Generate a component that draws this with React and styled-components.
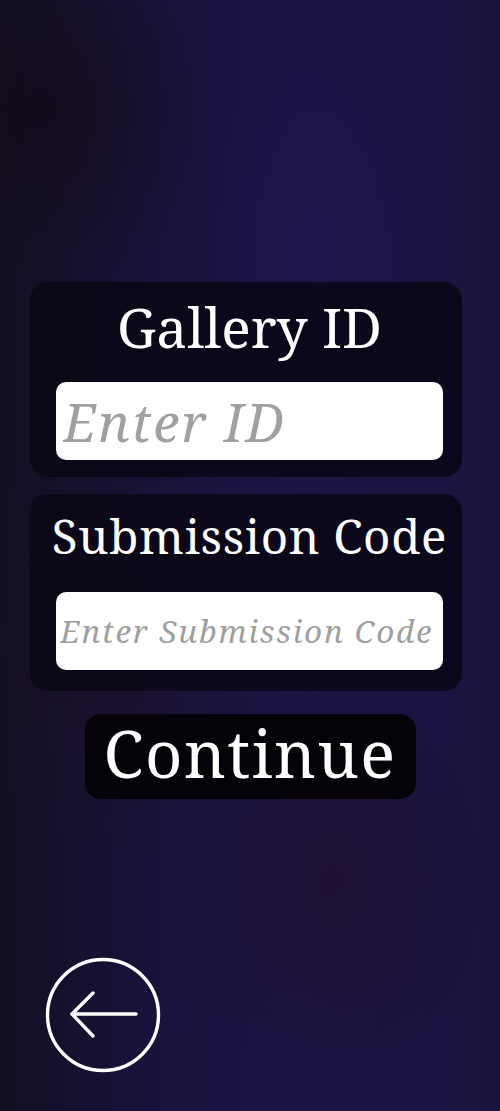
import React from 'react';
import styled, { createGlobalStyle } from 'styled-components';

const GlobalStyle = createGlobalStyle`
  html, body { margin: 0; padding: 0; }
  body {
    font-family: "Noto Serif", "DejaVu Serif", "Liberation Serif", serif;
    background: #151130;
  }
`;

const serif = `"Noto Serif", "DejaVu Serif", "Liberation Serif", serif`;

const Page = styled.div`
  width: 500px;
  height: 1111px;
  box-sizing: border-box;
  display: flex;
  flex-direction: column;
  align-items: center;
  padding-top: 282px;
  background:
    radial-gradient(ellipse 170px 300px at 320px 260px, rgba(36, 22, 86, 0.55), transparent 70%),
    radial-gradient(ellipse 220px 320px at 120px 640px, rgba(30, 14, 34, 0.5), transparent 70%),
    radial-gradient(ellipse 220px 300px at 330px 880px, rgba(32, 14, 40, 0.6), transparent 70%),
    radial-gradient(ellipse 240px 260px at 50px 110px, rgba(20, 10, 24, 0.7), transparent 70%),
    linear-gradient(90deg, #120f22 0%, #19133f 35%, #1c1546 60%, #1a1440 100%);
  position: relative;
`;

const Card = styled.div`
  width: 432px;
  box-sizing: border-box;
  background: rgba(10, 7, 22, 0.88);
  border-radius: 18px;
  display: flex;
  flex-direction: column;
  align-items: center;
  padding: ${p => p.$pad};
  margin: 0 8px 17px 0;
`;

const Label = styled.div`
  color: #ffffff;
  font-size: ${p => p.$size}px;
  letter-spacing: ${p => p.$spacing || 0}px;
  line-height: 1;
  margin-bottom: ${p => p.$gap}px;
  white-space: nowrap;
`;

const Field = styled.input`
  width: 387px;
  height: 78px;
  flex-shrink: 0;
  box-sizing: border-box;
  border: none;
  border-radius: 10px;
  background: #ffffff;
  padding: 0 ${p => p.$inset}px;
  font-family: ${serif};
  font-style: italic;
  font-size: ${p => p.$size}px;
  letter-spacing: ${p => p.$spacing}px;
  color: #222;
  outline: none;
  &::placeholder {
    color: #a0a0a0;
    font-style: italic;
  }
`;

const ContinueButton = styled.button`
  margin-top: 6px;
  width: 331px;
  height: 85px;
  border: none;
  border-radius: 16px;
  background: #050308;
  color: #ffffff;
  font-family: ${serif};
  font-size: 65px;
  letter-spacing: 1.5px;
  line-height: 1;
  padding: 0 0 6px;
  cursor: pointer;
`;

const BackButton = styled.button`
  position: absolute;
  left: 45px;
  bottom: 38px;
  width: 116px;
  height: 116px;
  padding: 0;
  border: none;
  background: transparent;
  cursor: pointer;
  svg { display: block; }
`;

export default function App() {
  return (
    <>
      <GlobalStyle />
      <Page>
        <Card $pad="17px 19px 17px 26px">
          <Label $size={55} $gap={28}>Gallery ID</Label>
          <Field $size={53} $spacing={2} $inset={7} placeholder="Enter ID" />
        </Card>
        <Card $pad="18px 19px 21px 26px">
          <Label $size={47.5} $spacing={0.7} $gap={32}>Submission Code</Label>
          <Field $size={31.5} $spacing={1.8} $inset={4} placeholder="Enter Submission Code" />
        </Card>
        <ContinueButton>Continue</ContinueButton>
        <BackButton aria-label="Back">
          <svg width="116" height="116" viewBox="0 0 116 116" fill="none" stroke="#fff" strokeWidth="3.4" strokeLinecap="round" strokeLinejoin="round">
            <circle cx="58" cy="58" r="55.5" />
            <path d="M91 57H27" />
            <path d="M48 36L27 57L48 79" />
          </svg>
        </BackButton>
      </Page>
    </>
  );
}
